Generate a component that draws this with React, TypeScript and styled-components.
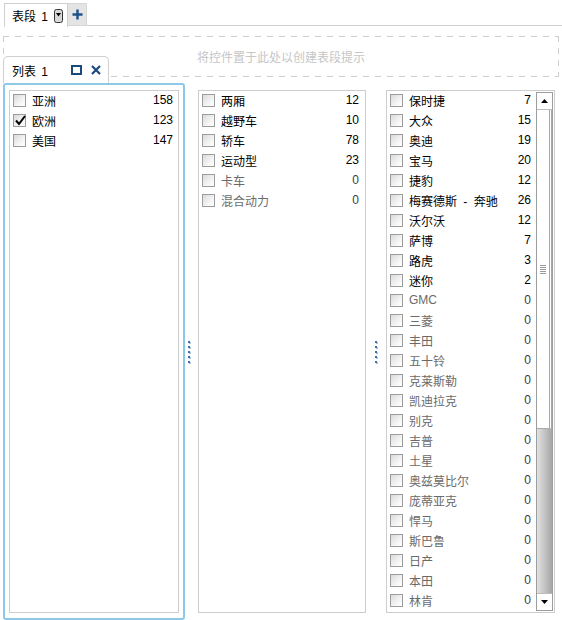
import React from "react";
import styled, { createGlobalStyle } from "styled-components";

const Global = createGlobalStyle`
  html, body { margin: 0; padding: 0; background: #fff; }
  body { font-family: "Liberation Sans", "Noto Sans CJK SC", sans-serif; font-size: 12px; color: #000; }
`;

const Page = styled.div`
  width: 562px;
  height: 620px;
  overflow: hidden;
  padding-top: 3px;
  box-sizing: border-box;
`;

const TopBar = styled.div`
  display: flex;
  align-items: flex-start;
  height: 23px;
  padding-left: 4px;
`;

const SectionTab = styled.div`
  box-sizing: border-box;
  height: 24px;
  width: 64px;
  border: 1px solid #cfcfcf;
  border-bottom: none;
  background: #fff;
  display: flex;
  align-items: center;
  padding-left: 7px;
  gap: 6px;
  font-size: 12px;
  word-spacing: 2px;
`;

const AddButton = styled.div`
  box-sizing: border-box;
  width: 19px;
  height: 23px;
  background: #e4e4e4;
  border: 1px solid #d6d6d6;
  border-left: none;
  display: flex;
  align-items: center;
  justify-content: center;
`;

const TopRule = styled.div`
  flex: 1;
  height: 23px;
  border-bottom: 1px solid #cfcfcf;
  box-sizing: border-box;
`;

const DropZone = styled.div`
  margin: 10px 3px 0;
  height: 41px;
  box-sizing: border-box;
  background-image:
    repeating-linear-gradient(to right, #cdcdcd 0 6px, transparent 6px 12px),
    repeating-linear-gradient(to right, #cdcdcd 0 6px, transparent 6px 12px),
    repeating-linear-gradient(to bottom, #cdcdcd 0 6px, transparent 6px 12px),
    repeating-linear-gradient(to bottom, #cdcdcd 0 6px, transparent 6px 12px);
  background-size: 100% 1px, 100% 1px, 1px 100%, 1px 100%;
  background-position: 0 0, 0 100%, 0 0, 100% 0;
  background-repeat: no-repeat;
  display: flex;
  align-items: center;
  justify-content: center;
  color: #c6c6c6;
  font-size: 12px;
  padding-bottom: 1px;
`;

const Workspace = styled.div`
  margin-top: -21px;
  display: flex;
  flex-direction: column;
`;

const CellTab = styled.div`
  position: relative;
  z-index: 1;
  box-sizing: border-box;
  margin-left: 3px;
  width: 106px;
  height: 27px;
  border: 1px solid #cfcfcf;
  border-bottom: none;
  border-radius: 5px 5px 0 0;
  background: #fff;
  display: flex;
  align-items: center;
  padding: 0 0 0 8px;
  font-size: 12px;
  word-spacing: 2px;
`;

const TabLabel = styled.span`
  flex: 1;
`;

const TabIcons = styled.div`
  display: flex;
  align-items: center;
  gap: 9px;
  padding-right: 7px;
`;

const Cells = styled.div`
  display: flex;
  height: 537px;
  padding-left: 3px;
`;

const Cell = styled.div<{ $selected?: boolean; $width: number }>`
  box-sizing: border-box;
  width: ${(p) => p.$width}px;
  height: 100%;
  border: 2px solid ${(p) => (p.$selected ? "#8ec8e8" : "transparent")};
  border-radius: 3px;
  padding: 5px 4px;
  display: flex;
`;

const Splitter = styled.div<{ $width: number }>`
  width: ${(p) => p.$width}px;
  display: flex;
  align-items: center;
  justify-content: center;
`;

const Dots = styled.div`
  display: flex;
  flex-direction: column;
  gap: 3px;
`;

const Dot = styled.span`
  width: 2px;
  height: 2px;
  background: #3d6fa8;
  box-shadow: 1px 1px 0 #a9c1dd;
`;

const ListBox = styled.div`
  flex: 1;
  box-sizing: border-box;
  border: 1px solid #cdcdcd;
  display: flex;
  overflow: hidden;
`;

const Rows = styled.div`
  flex: 1;
  margin-top: -1px;
  display: flex;
  flex-direction: column;
`;

const Row = styled.div<{ $disabled?: boolean; $gap: number }>`
  height: 20px;
  display: flex;
  align-items: center;
  padding: 0 ${(p) => p.$gap}px 0 3px;
  color: ${(p) => (p.$disabled ? "#6a6a6a" : "#000")};
  font-size: 12px;
`;

const Box = styled.span`
  box-sizing: border-box;
  width: 13px;
  height: 13px;
  border: 1px solid #9c9c9c;
  background: linear-gradient(135deg, #dadada 0%, #f4f4f4 60%, #ffffff 100%);
  margin-right: 6px;
  position: relative;
  flex: none;
`;

const Check = styled.svg`
  position: absolute;
  left: 0px;
  top: -1px;
`;

const Label = styled.span`
  flex: 1;
  white-space: nowrap;
  word-spacing: 3px;
`;

const Count = styled.span<{ $disabled?: boolean }>`
  color: ${(p) => (p.$disabled ? "#3a3a3a" : "#000")};
  font-size: 12px;
`;

const Scrollbar = styled.div`
  width: 17px;
  margin: 1px 1px 1px 0;
  display: flex;
  flex-direction: column;
  background: linear-gradient(to right, #e2e2e2, #b8b8b8 70%, #a6a6a6);
  border: 1px solid #9d9d9d;
  box-sizing: border-box;
`;

const ArrowButton = styled.div`
  height: 16px;
  background: #fff;
  border-bottom: 1px solid #bbb;
  display: flex;
  align-items: center;
  justify-content: center;
  flex: none;
`;

const ArrowDown = styled(ArrowButton)`
  border-bottom: none;
  border-top: 1px solid #bbb;
  margin-top: auto;
`;

const Thumb = styled.div`
  height: 318px;
  background: #fff;
  border-right: 3px double #a8a8a8;
  border-bottom: 1px solid #aaa;
  display: flex;
  align-items: center;
  justify-content: center;
  flex: none;
`;

const Grip = styled.div`
  display: flex;
  flex-direction: column;
  gap: 1px;
`;

const GripLine = styled.span`
  width: 6px;
  height: 1px;
  background: #9a9a9a;
`;

type Item = { name: string; count: number; checked?: boolean };

const regions: Item[] = [
  { name: "亚洲", count: 158 },
  { name: "欧洲", count: 123, checked: true },
  { name: "美国", count: 147 },
];

const types: Item[] = [
  { name: "两厢", count: 12 },
  { name: "越野车", count: 10 },
  { name: "轿车", count: 78 },
  { name: "运动型", count: 23 },
  { name: "卡车", count: 0 },
  { name: "混合动力", count: 0 },
];

const makes: Item[] = [
  { name: "保时捷", count: 7 },
  { name: "大众", count: 15 },
  { name: "奥迪", count: 19 },
  { name: "宝马", count: 20 },
  { name: "捷豹", count: 12 },
  { name: "梅赛德斯 - 奔驰", count: 26 },
  { name: "沃尔沃", count: 12 },
  { name: "萨博", count: 7 },
  { name: "路虎", count: 3 },
  { name: "迷你", count: 2 },
  { name: "GMC", count: 0 },
  { name: "三菱", count: 0 },
  { name: "丰田", count: 0 },
  { name: "五十铃", count: 0 },
  { name: "克莱斯勒", count: 0 },
  { name: "凯迪拉克", count: 0 },
  { name: "别克", count: 0 },
  { name: "吉普", count: 0 },
  { name: "土星", count: 0 },
  { name: "奥兹莫比尔", count: 0 },
  { name: "庞蒂亚克", count: 0 },
  { name: "悍马", count: 0 },
  { name: "斯巴鲁", count: 0 },
  { name: "日产", count: 0 },
  { name: "本田", count: 0 },
  { name: "林肯", count: 0 },
];

const ItemRows = ({ items, gap }: { items: Item[]; gap: number }) => (
  <Rows>
    {items.map((it) => (
      <Row key={it.name} $disabled={it.count === 0} $gap={gap}>
        <Box>
          {it.checked && (
            <Check width="13" height="13" viewBox="0 0 13 13">
              <path d="M2 6.5 L5 10 L11 2" fill="none" stroke="#000" strokeWidth="2" />
            </Check>
          )}
        </Box>
        <Label>{it.name}</Label>
        <Count $disabled={it.count === 0}>{it.count}</Count>
      </Row>
    ))}
  </Rows>
);

const SplitDots = () => (
  <Dots>
    {[0, 1, 2, 3, 4].map((i) => (
      <Dot key={i} />
    ))}
  </Dots>
);

export default function App() {
  return (
    <>
      <Global />
      <Page>
        <TopBar>
          <SectionTab>
            <span>表段 1</span>
            <svg width="9" height="14" viewBox="0 0 9 14">
              <rect x="0.5" y="0.5" width="8" height="13" rx="2" fill="#d8d8d8" stroke="#333" />
              <path d="M2 4 H7 L4.5 7.5 Z" fill="#000" />
            </svg>
          </SectionTab>
          <AddButton>
            <svg width="11" height="11" viewBox="0 0 11 11">
              <path d="M5.5 0.5 V10.5 M0.5 5.5 H10.5" stroke="#1d5286" strokeWidth="2.4" />
            </svg>
          </AddButton>
          <TopRule />
        </TopBar>
        <DropZone>将控件置于此处以创建表段提示</DropZone>
        <Workspace>
          <CellTab>
            <TabLabel>列表 1</TabLabel>
            <TabIcons>
              <svg width="11" height="10" viewBox="0 0 11 10">
                <rect x="1" y="1" width="9" height="8" fill="none" stroke="#1a4a7c" strokeWidth="2" />
              </svg>
              <svg width="10" height="10" viewBox="0 0 10 10">
                <path d="M1 1 L9 9 M9 1 L1 9" stroke="#1a4a7c" strokeWidth="2.2" />
              </svg>
            </TabIcons>
          </CellTab>
          <Cells>
            <Cell $selected $width={182}>
              <ListBox>
                <ItemRows items={regions} gap={5} />
              </ListBox>
            </Cell>
            <Splitter $width={7}>
              <SplitDots />
            </Splitter>
            <Cell $width={180}>
              <ListBox>
                <ItemRows items={types} gap={6} />
              </ListBox>
            </Cell>
            <Splitter $width={8}>
              <SplitDots />
            </Splitter>
            <Cell $width={181}>
              <ListBox>
                <ItemRows items={makes} gap={5} />
                <Scrollbar>
                  <ArrowButton>
                    <svg width="7" height="4" viewBox="0 0 7 4">
                      <path d="M0 4 H7 L3.5 0 Z" fill="#000" />
                    </svg>
                  </ArrowButton>
                  <Thumb>
                    <Grip>
                      {[0, 1, 2, 3, 4].map((i) => (
                        <GripLine key={i} />
                      ))}
                    </Grip>
                  </Thumb>
                  <ArrowDown>
                    <svg width="7" height="4" viewBox="0 0 7 4">
                      <path d="M0 0 H7 L3.5 4 Z" fill="#000" />
                    </svg>
                  </ArrowDown>
                </Scrollbar>
              </ListBox>
            </Cell>
          </Cells>
        </Workspace>
      </Page>
    </>
  );
}
